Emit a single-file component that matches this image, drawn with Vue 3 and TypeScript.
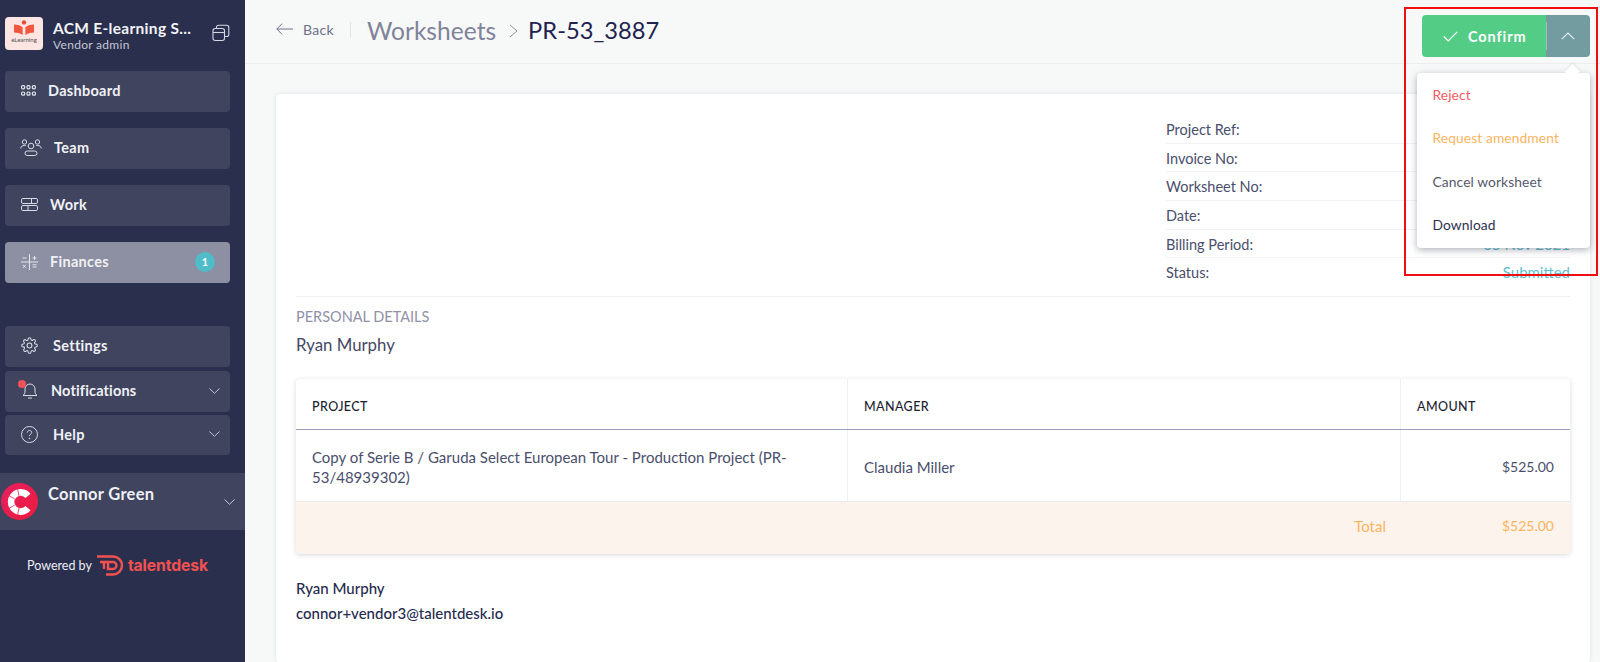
<script setup lang="ts">
const metaRows = [
  { label: 'Project Ref:', value: '' },
  { label: 'Invoice No:', value: '' },
  { label: 'Worksheet No:', value: '' },
  { label: 'Date:', value: '' },
  { label: 'Billing Period:', value: '05 Nov 2021' },
  { label: 'Status:', value: 'Submitted' },
]
</script>

<template>
  <div class="app">
    <aside class="sidebar">
      <div class="org">
        <div class="org-logo">
          <svg width="22" height="15" viewBox="0 0 22 15">
            <circle cx="11" cy="2.4" r="2.2" fill="#ef4b3c" />
            <path d="M1 4.5c3 0 6 .8 8.6 2.6V15C7 13.4 4 12.6 1 12.6z" fill="#f0553f" />
            <path d="M21 4.5c-3 0-6 .8-8.6 2.6V15c2.6-1.6 5.6-2.4 8.6-2.4z" fill="#f0553f" />
          </svg>
          <span class="org-logo-text">eLearning</span>
        </div>
        <div class="org-text">
          <div class="org-name">ACM E-learning S...</div>
          <div class="org-role">Vendor admin</div>
        </div>
        <svg class="org-switch" width="18" height="18" viewBox="0 0 18 18" fill="none" stroke="#d5d7e2" stroke-width="1.1">
          <rect x="1" y="4.5" width="11.5" height="12" rx="2.2" />
          <path d="M1 8.5h11.5" />
          <path d="M4.5 4.5V3.2C4.5 2 5.5 1.2 6.6 1.2h8c1.2 0 2.2 1 2.2 2.2v7c0 1.2-1 2.1-2.3 2.1h-2" />
        </svg>
      </div>

      <nav class="nav">
        <a class="nav-item">
          <svg width="15" height="11" viewBox="0 0 15 11" fill="none" stroke="#e2e4ec" stroke-width="1.2">
            <rect x="0.6" y="0.6" width="3" height="3.2" rx="1" /><rect x="6" y="0.6" width="3" height="3.2" rx="1" /><rect x="11.4" y="0.6" width="3" height="3.2" rx="1" />
            <rect x="0.6" y="7" width="3" height="3.2" rx="1" /><rect x="6" y="7" width="3" height="3.2" rx="1" /><rect x="11.4" y="7" width="3" height="3.2" rx="1" />
          </svg>
          <span class="lbl-dashboard">Dashboard</span>
        </a>
        <a class="nav-item team">
          <svg width="22" height="17" viewBox="0 0 22 17" fill="none" stroke="#d9dbe5" stroke-width="1">
            <circle cx="4.5" cy="3" r="2.2" /><circle cx="17.5" cy="3" r="2.2" /><circle cx="11" cy="7" r="2.8" />
            <path d="M.8 9.5c0-2 1.4-3 3.7-3 .6 0 1.1 0 1.6.2M21.2 9.5c0-2-1.4-3-3.7-3-.6 0-1.1 0-1.6.2" />
            <rect x="5" y="12" width="12" height="4.5" rx="2.2" />
          </svg>
          <span class="lbl-team">Team</span>
        </a>
        <a class="nav-item">
          <svg width="17" height="13" viewBox="0 0 17 13" fill="none" stroke="#d9dbe5" stroke-width="1">
            <rect x="0.5" y="0.5" width="16" height="5" rx="1.4" /><rect x="0.5" y="7.5" width="16" height="5" rx="1.4" />
            <path d="M10.5 .5v5M7 7.5v5" />
          </svg>
          <span class="lbl-work">Work</span>
        </a>
        <a class="nav-item finances">
          <svg width="17" height="16" viewBox="0 0 17 16" fill="none" stroke="#e4e5ec" stroke-width="1">
            <path d="M8.5 0v16M0 8h17M1.5 4h4M11.5 4h4M13.5 2v4M11.5 10.8h4M11.5 13h4M2 10.8l2.6 3M4.6 10.8l-2.6 3" />
          </svg>
          <span class="lbl-work">Finances</span>
          <span class="badge">1</span>
        </a>
      </nav>

      <nav class="nav-bottom">
        <a class="nav-item">
          <svg width="17" height="17" viewBox="0 0 24 24" fill="none" stroke="#d9dbe5" stroke-width="1.5" stroke-linejoin="round">
            <circle cx="12" cy="12" r="3.4" />
            <path d="M19.4 15a1.65 1.65 0 0 0 .33 1.82l.06.06a2 2 0 1 1-2.83 2.83l-.06-.06a1.65 1.65 0 0 0-2.8 1.17V21a2 2 0 1 1-4 0v-.09a1.65 1.65 0 0 0-2.8-1.2l-.06.06a2 2 0 1 1-2.83-2.83l.06-.06A1.65 1.65 0 0 0 3.1 14H3a2 2 0 1 1 0-4h.09a1.65 1.65 0 0 0 1.2-2.8l-.06-.06a2 2 0 1 1 2.83-2.83l.06.06A1.65 1.65 0 0 0 10 3.1V3a2 2 0 1 1 4 0v.09a1.65 1.65 0 0 0 2.8 1.2l.06-.06a2 2 0 1 1 2.83 2.83l-.06.06A1.65 1.65 0 0 0 20.9 10H21a2 2 0 1 1 0 4h-.09a1.65 1.65 0 0 0-1.51 1z" />
          </svg>
          <span class="lbl-settings">Settings</span>
        </a>
        <a class="nav-item notifications">
          <span class="bell">
            <svg width="18" height="18" viewBox="0 0 18 18" fill="none" stroke="#d9dbe5" stroke-width="1">
              <path d="M2 13.5c1.4-1 2-2.2 2-4.5V7a5 5 0 0 1 10 0v2c0 2.3.6 3.5 2 4.5zM7 16h4" />
            </svg>
            <i class="bell-dot"></i>
          </span>
          <span class="lbl-notif">Notifications</span>
          <svg class="chev" width="11" height="6" viewBox="0 0 11 6" fill="none" stroke="#c3c5d2" stroke-width="1"><path d="M.5.5l5 4.8 5-4.8" /></svg>
        </a>
        <a class="nav-item">
          <svg width="17" height="17" viewBox="0 0 17 17" fill="none" stroke="#d9dbe5" stroke-width="1">
            <circle cx="8.5" cy="8.5" r="8" />
            <path d="M6.3 6.6c0-1.3 1-2.1 2.2-2.1s2.2.8 2.2 2c0 1.6-2.2 1.7-2.2 3.4" />
            <circle cx="8.5" cy="12.4" r=".4" />
          </svg>
          <span class="lbl-settings">Help</span>
          <svg class="chev" width="11" height="6" viewBox="0 0 11 6" fill="none" stroke="#c3c5d2" stroke-width="1"><path d="M.5.5l5 4.8 5-4.8" /></svg>
        </a>
      </nav>

      <div class="user">
        <div class="avatar">
          <svg width="26" height="26" viewBox="0 0 26 26" fill="none">
            <path d="M21 6.8A9.6 9.6 0 1 0 21 19.2" stroke="#fff" stroke-width="6.6" />
            <path d="M7.8 10L1.7 6.5M7.8 16l-6.1 3.5M12 7l-1.3-6.8M12 19l-1.3 6.8" stroke="#e8224f" stroke-width=".8" />
          </svg>
        </div>
        <div class="user-name">Connor Green</div>
        <svg class="chev" width="11" height="6" viewBox="0 0 11 6" fill="none" stroke="#c3c5d2" stroke-width="1"><path d="M.5.5l5 4.8 5-4.8" /></svg>
      </div>

      <div class="powered">
        <span class="powered-by">Powered by</span>
        <svg width="26" height="21" viewBox="0 0 26 21" fill="none" stroke="#f2514f" stroke-width="2.4">
          <path d="M0 1.5h16a9 9 0 0 1 0 18H9" />
          <path d="M3 7h13a3.5 3.5 0 0 1 0 7h-5V7" />
          <path d="M7 7v7" />
        </svg>
        <span class="brand">talentdesk</span>
      </div>
    </aside>

    <main class="main">
      <header class="topbar">
        <a class="back">
          <svg width="17" height="12" viewBox="0 0 17 12" fill="none" stroke="#6d7089" stroke-width="1"><path d="M6 .7L.8 6 6 11.3M.8 6H17" /></svg>
          <span>Back</span>
        </a>
        <i class="topbar-sep"></i>
        <span class="crumb">Worksheets</span>
        <svg class="crumb-arrow" width="9" height="14" viewBox="0 0 9 14" fill="none" stroke="#8d90a4" stroke-width="1"><path d="M1 1l7 6-7 6" /></svg>
        <span class="crumb-current">PR-53_3887</span>
      </header>

      <section class="content">
        <div class="card">
          <div class="meta">
            <div v-for="row in metaRows" :key="row.label" class="meta-row">
              <span>{{ row.label }}</span>
              <span class="meta-value">{{ row.value }}</span>
            </div>
          </div>

          <div class="personal">
            <div class="personal-title">PERSONAL DETAILS</div>
            <div class="personal-name">Ryan Murphy</div>
          </div>

          <div class="table-wrap">
            <div class="table-grid head">
              <div class="cell">PROJECT</div>
              <div class="cell">MANAGER</div>
              <div class="cell last">AMOUNT</div>
            </div>
            <div class="table-grid body">
              <div class="cell">Copy of Serie B / Garuda Select European Tour - Production Project (PR-53/48939302)</div>
              <div class="cell">Claudia Miller</div>
              <div class="cell last amount">$525.00</div>
            </div>
            <div class="total">
              <span class="total-label">Total</span>
              <span class="total-value">$525.00</span>
            </div>
          </div>

          <div class="signature">
            <div class="sig-name">Ryan Murphy</div>
            <div class="sig-mail">connor+vendor3@talentdesk.io</div>
          </div>
        </div>
      </section>

      <div class="actions">
        <button class="confirm">
          <svg width="15" height="11" viewBox="0 0 15 11" fill="none" stroke="#fff" stroke-width="1.1"><path d="M.8 5.5l4.4 4.5L14.2.8" /></svg>
          <span>Confirm</span>
        </button>
        <button class="toggle">
          <svg width="14" height="8" viewBox="0 0 14 8" fill="none" stroke="#e6eeee" stroke-width="1.1"><path d="M.8 7.2L7 1l6.2 6.2" /></svg>
        </button>
      </div>
      <div class="menu">
        <i class="menu-arrow"></i>
        <a class="reject">Reject</a>
        <a class="amend">Request amendment</a>
        <a class="cancel">Cancel worksheet</a>
        <a class="download">Download</a>
      </div>
      <div class="highlight"></div>
    </main>
  </div>
</template>

<style>
html, body {
  margin: 0;
  overflow: hidden;
}
</style>

<style scoped>
.app {
  display: flex;
  width: 1600px;
  height: 662px;
  overflow: hidden;
  font-family: Lato, "Open Sans", sans-serif;
  color: #2d3154;
}

.sidebar {
  width: 245px;
  flex: none;
  background: #2b2f4e;
  display: flex;
  flex-direction: column;
}

.org {
  display: flex;
  align-items: center;
  height: 71px;
  padding-left: 5px;
  box-sizing: border-box;
}

.org-logo {
  width: 38px;
  height: 33px;
  margin-top: -4px;
  background: #fde5e1;
  border-radius: 4px;
  display: flex;
  flex-direction: column;
  align-items: center;
  padding-top: 3px;
  box-sizing: border-box;
}

.org-logo-text {
  font-size: 6px;
  line-height: 8px;
  margin-top: 1px;
  color: #4c4c55;
}

.org-text {
  margin: -1px 0 0 10px;
  width: 145px;
}

.org-name {
  font-size: 15.5px;
  line-height: 19px;
  font-weight: 700;
  letter-spacing: 0.3px;
  color: #f2f3f7;
  white-space: nowrap;
}

.org-role {
  font-size: 12px;
  line-height: 14px;
  letter-spacing: 0.3px;
  color: #c4c6d3;
}

.org-switch {
  margin: -6px 0 0 14px;
}

.nav {
  display: flex;
  flex-direction: column;
  gap: 16.5px;
  padding: 0 15px 0 5px;
}

.nav-bottom {
  display: flex;
  flex-direction: column;
  gap: 3px;
  padding: 0 15px 0 5px;
  margin-top: 43.5px;
}

.nav-item {
  height: 40.5px;
  background: #40445f;
  border-radius: 4px;
  display: flex;
  align-items: center;
  padding: 0 0 1px 16px;
  box-sizing: border-box;
  color: #f0f1f5;
  font-size: 14.5px;
  font-weight: 700;
  letter-spacing: 0.3px;
}

.nav-item.team {
  padding-left: 15px;
}

.nav-item.finances {
  background: #8d8fa2;
}

.nav-item.notifications {
  margin-top: 1.5px;
}

.lbl-dashboard { margin-left: 12px; }
.lbl-team { margin-left: 12px; }
.lbl-work { margin-left: 12px; }
.lbl-settings { margin-left: 15px; }
.lbl-notif { margin-left: 12px; letter-spacing: 0.15px; }

.bell {
  position: relative;
  display: flex;
}

.bell-dot {
  position: absolute;
  left: -3px;
  top: -2px;
  width: 8px;
  height: 8px;
  border-radius: 50%;
  background: #f2515a;
}

.badge {
  margin-left: auto;
  margin-right: 15px;
  width: 20px;
  height: 20px;
  border-radius: 50%;
  background: #4fbcc9;
  font-size: 11px;
  line-height: 20px;
  text-align: center;
  color: #fff;
}

.chev {
  margin-left: auto;
  margin-right: 10px;
}

.user {
  margin-top: 18px;
  height: 57px;
  background: #40445f;
  display: flex;
  align-items: flex-start;
}

.avatar {
  width: 37px;
  height: 37px;
  margin: 10px 0 0 1px;
  border-radius: 50%;
  background: linear-gradient(135deg, #e8205f, #e91c3c);
  display: flex;
  align-items: center;
  justify-content: center;
}

.user-name {
  margin: 10.5px 0 0 10px;
  font-size: 16.5px;
  line-height: 20px;
  font-weight: 700;
  letter-spacing: 0.3px;
  color: #eef0f5;
}

.user .chev {
  margin: 25.5px 10px 0 auto;
}

.powered {
  display: flex;
  align-items: center;
  margin: 25px 0 0 27px;
}

.powered-by {
  font-size: 12.5px;
  color: #eceef3;
  margin-right: 5px;
}

.brand {
  font-family: Inter, Lato, sans-serif;
  font-size: 15.7px;
  font-weight: 700;
  letter-spacing: -0.1px;
  color: #f2514f;
  margin-left: 5px;
}

.main {
  flex: 1;
  min-width: 0;
  position: relative;
  background: #f7f8f8;
  display: flex;
  flex-direction: column;
}

.topbar {
  height: 64px;
  flex: none;
  box-sizing: border-box;
  border-bottom: 1px solid #eceded;
  display: flex;
  align-items: center;
  padding: 0 0 3px 31px;
}

.back {
  display: flex;
  align-items: center;
  gap: 10px;
  margin-top: -2px;
  font-size: 14px;
  letter-spacing: 0.3px;
  color: #6d7089;
}

.topbar-sep {
  width: 1px;
  height: 16px;
  background: #e3e4e8;
  margin: 0 16px;
}

.crumb {
  font-size: 24.6px;
  color: #80839a;
}

.crumb-arrow {
  margin: 2px 10px 0 13px;
}

.crumb-current {
  font-size: 23.7px;
  color: #1f2350;
}

.content {
  flex: 1;
  min-height: 0;
  padding: 30px 10px 0 31px;
}

.card {
  height: 100%;
  box-sizing: border-box;
  background: #fff;
  border-radius: 3px;
  box-shadow: 0 0 4px rgba(40, 44, 80, 0.12);
  padding: 21px 20px 0;
}

.meta {
  margin-left: 870px;
  font-size: 14.5px;
  color: #4a4e6c;
  border-bottom: 1px solid #eeeff1;
  position: relative;
}

.meta::after {
  content: "";
  position: absolute;
  left: -870px;
  right: 0;
  bottom: -1px;
  height: 1px;
  background: #eeeff1;
}

.meta-row {
  display: flex;
  justify-content: space-between;
  height: 28.7px;
  line-height: 29px;
  box-sizing: border-box;
  border-bottom: 1px solid #f1f2f3;
}

.meta-row:last-child {
  border-bottom: 0;
  height: 38px;
}

.meta-value {
  font-size: 15px;
  color: #5fc0cf;
}

.personal {
  padding-top: 10px;
}

.personal-title {
  font-size: 14.5px;
  line-height: 20px;
  color: #8f92a6;
}

.personal-name {
  margin-top: 7px;
  font-size: 16.8px;
  line-height: 22px;
  color: #454965;
}

.table-wrap {
  margin-top: 22.5px;
  border-radius: 4px;
  box-shadow: 0 1px 5px rgba(40, 44, 80, 0.18);
  overflow: hidden;
}

.table-grid {
  display: grid;
  grid-template-columns: 552px 553px 1fr;
}

.cell {
  padding: 3px 16px 0;
  border-right: 1px solid #eff0f3;
  display: flex;
  align-items: center;
  font-size: 15px;
  color: #4a4e6c;
  line-height: 20px;
}

.cell.last {
  border-right: 0;
}

.head {
  height: 50px;
  border-bottom: 1px solid #9a9db8;
}

.head .cell {
  padding-top: 6px;
  font-size: 12.5px;
  font-weight: 500;
  letter-spacing: 0.4px;
  color: #1c1d30;
}

.body {
  height: 71px;
  border-bottom: 1px solid #e9eaec;
}

.cell.amount {
  justify-content: flex-end;
  font-size: 14px;
}

.total {
  height: 52px;
  box-sizing: border-box;
  background: #fbf3ec;
  display: flex;
  align-items: center;
  justify-content: flex-end;
  padding: 0 16px 4px 0;
  color: #fdb45f;
  font-size: 14px;
}

.total-label {
  font-size: 15px;
}

.total-value {
  margin-left: 116px;
}

.signature {
  margin-top: 24px;
  font-size: 15px;
  color: #262a4e;
}

.sig-name {
  font-weight: 500;
  line-height: 20px;
}

.sig-mail {
  margin-top: 5px;
  line-height: 20px;
  font-weight: 500;
}

.actions {
  position: absolute;
  top: 15px;
  right: 10px;
  display: flex;
  height: 42px;
  border-radius: 4px;
  overflow: hidden;
}

.confirm,
.toggle {
  border: 0;
  padding: 0;
  display: flex;
  align-items: center;
  color: #fff;
  font-family: inherit;
}

.confirm {
  width: 124px;
  padding-left: 21px;
  box-sizing: border-box;
  gap: 10px;
  background: #53cc85;
  font-size: 14.5px;
  font-weight: 700;
  letter-spacing: 0.9px;
}

.toggle {
  width: 44px;
  justify-content: center;
  background: #739ca1;
  position: relative;
}

.toggle::before {
  content: "";
  position: absolute;
  left: 0;
  top: 7px;
  bottom: 7px;
  width: 1px;
  background: #a6bdc0;
}

.menu {
  position: absolute;
  top: 72.5px;
  right: 10px;
  width: 173px;
  height: 175px;
  background: #fff;
  border-radius: 4px;
  box-shadow: 0 2px 7px rgba(30, 34, 60, 0.35);
  display: flex;
  flex-direction: column;
  padding: 0 15.5px;
  box-sizing: border-box;
  font-size: 13.8px;
  letter-spacing: 0.1px;
}

.menu a {
  height: 43.5px;
  line-height: 43.5px;
}

.menu-arrow {
  position: absolute;
  top: -7px;
  right: 12px;
  width: 11px;
  height: 11px;
  background: #fff;
  transform: rotate(45deg);
  box-shadow: -1px -1px 2px rgba(30, 34, 60, 0.08);
}

.reject { color: #f45b5f; }
.amend { color: #fdb45f; }
.cancel { color: #55586c; }
.download { color: #2d3154; }

.highlight {
  position: absolute;
  top: 7px;
  right: 2px;
  width: 194px;
  height: 269px;
  box-sizing: border-box;
  border: 2px solid #f20d12;
  pointer-events: none;
}
</style>
